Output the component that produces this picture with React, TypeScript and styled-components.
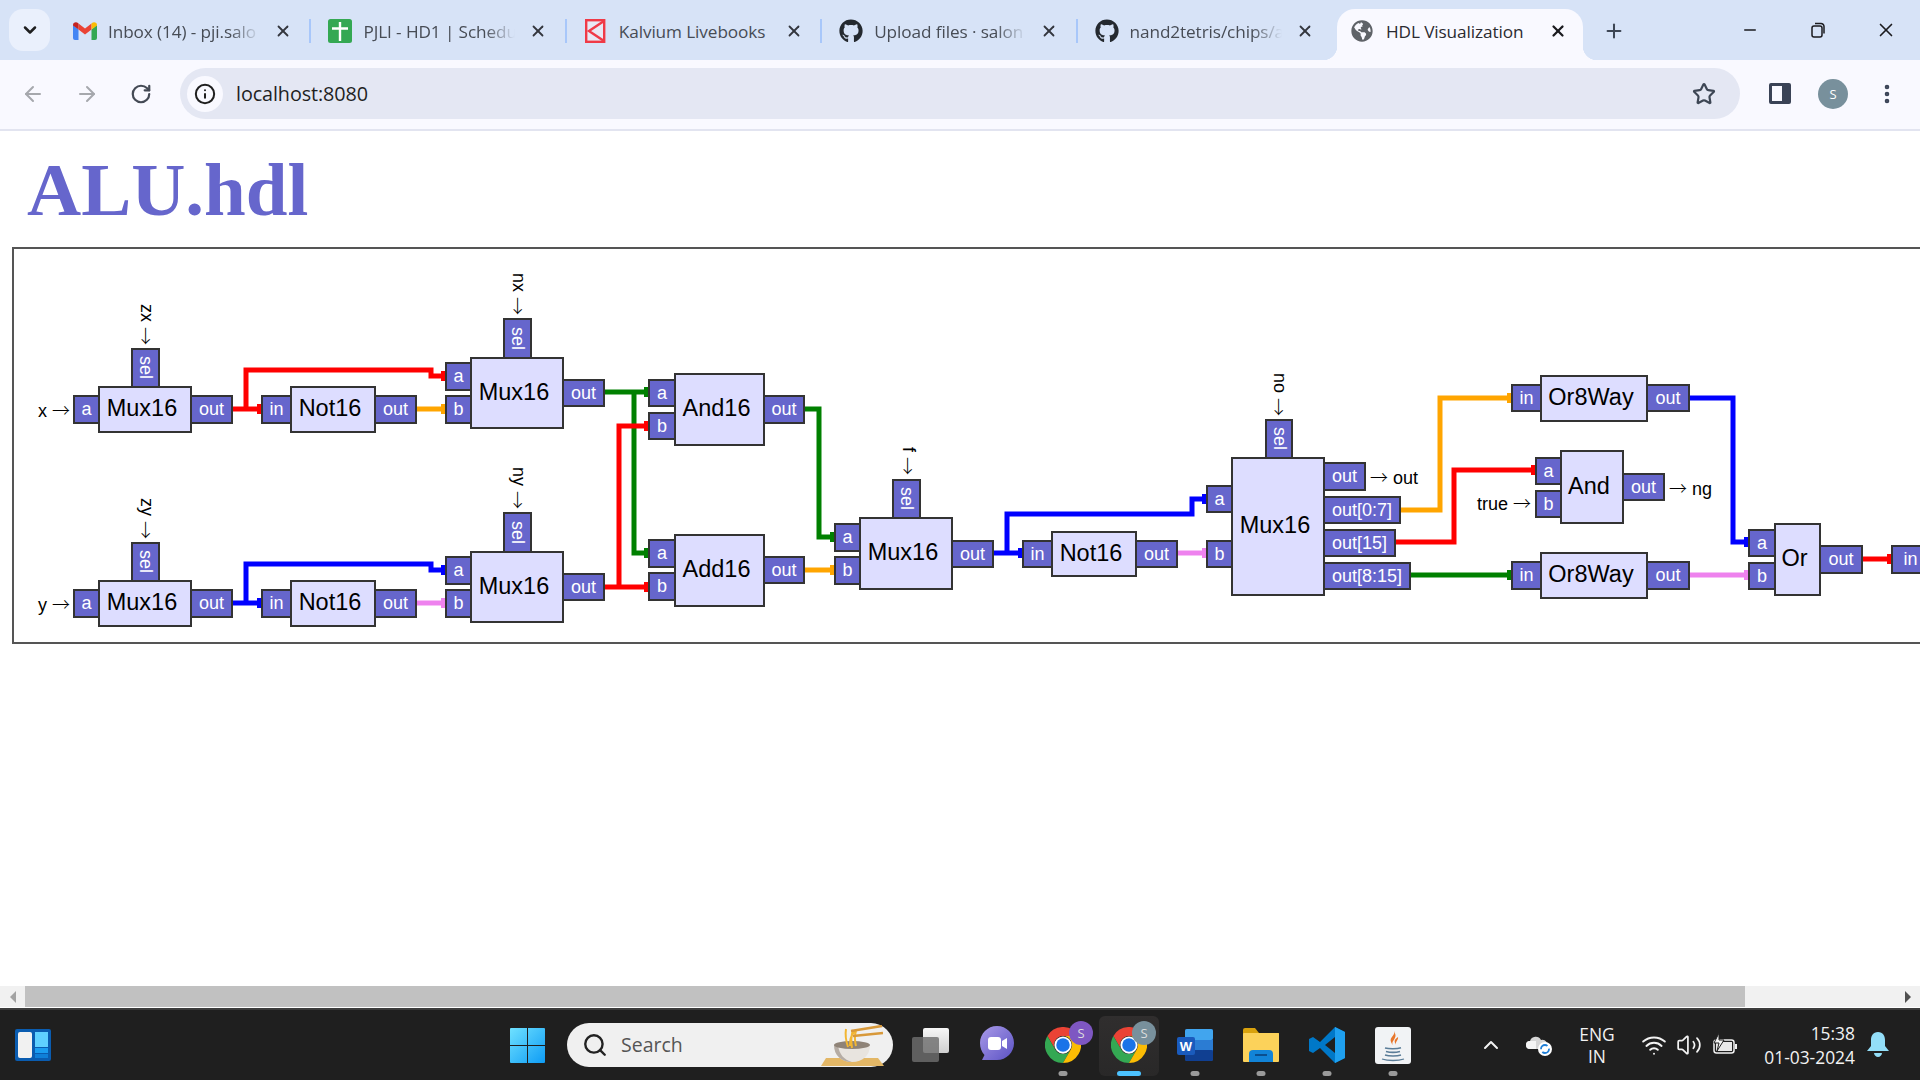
import React from 'react';
import styled, { createGlobalStyle } from 'styled-components';
import { ArrowLeft, ArrowRight, RotateCw, Star, EllipsisVertical, X, Plus, Minus, ChevronDown, ChevronUp, Search, Wifi, Volume2, Info } from 'lucide-react';
import { FaGithub, FaGlobeAmericas } from 'react-icons/fa';

const Global = createGlobalStyle`
  html, body { margin: 0; padding: 0; overflow: hidden; background: #fff; }
  * { box-sizing: border-box; }
`;

const UI = `"Open Sans", "Noto Sans", sans-serif`;
const ARIAL = `"Liberation Sans", Arial, sans-serif`;

const Page = styled.div`
  width: 1920px; height: 1080px; display: flex; flex-direction: column; overflow: hidden; font-family: ${UI};
`;

/* ---------- tab strip ---------- */
const TabStrip = styled.div`
  height: 60px; flex: none; background: #d7e3f7; display: flex; align-items: stretch; padding-left: 9px;
`;
const TabMenu = styled.div`
  width: 41px; height: 42px; margin-top: 9px; border-radius: 14px; background: #eaf0fc; color: #1f1f1f;
  display: flex; align-items: center; justify-content: center; flex: none;
`;
const TabList = styled.div`
  display: flex; margin-left: 5px; flex: none;
`;
const Tab = styled.div<{ $last?: boolean }>`
  width: 255.4px; height: 60px; flex: none; display: flex; align-items: center; padding: 2px 0 0 18px; position: relative;
  &::after {
    content: ''; position: absolute; right: -1px; top: 19px; height: 24px; width: 2px;
    background: ${p => (p.$last ? 'transparent' : '#a8c7fa')};
  }
`;
const ActiveTab = styled.div`
  width: 246px; height: 51px; margin: 9px 0 0 5px; flex: none; display: flex; align-items: center; padding: 0 0 7px 13px;
  background: #f9f9ff; border-radius: 18px 18px 0 0; position: relative;
  &::before, &::after { content: ''; position: absolute; bottom: 0; width: 14px; height: 14px; }
  &::before { left: -14px; background: radial-gradient(circle at 0 0, transparent 14px, #f9f9ff 14.5px); }
  &::after { right: -14px; background: radial-gradient(circle at 100% 0, transparent 14px, #f9f9ff 14.5px); }
`;
const TabIcon = styled.div`
  width: 24px; height: 24px; flex: none; display: flex; align-items: center; justify-content: center; color: #24292f;
`;
const TabTitle = styled.div<{ $fade?: boolean; $active?: boolean }>`
  width: 152px; margin-left: ${p => (p.$active ? '12px' : '11px')}; white-space: nowrap; font-size: 17.2px; letter-spacing: -0.1px;
  color: ${p => (p.$active ? '#2b2b30' : '#474c55')};
  ${p => (p.$fade ? 'mask-image: linear-gradient(to right, #000 80%, transparent 100%);' : '')}
`;
const TabClose = styled.div<{ $active?: boolean }>`
  margin-left: ${p => (p.$active ? '10px' : '13px')}; width: 20px; height: 20px; display: flex; align-items: center; justify-content: center; color: #33363d;
`;
const NewTab = styled.div`
  margin-left: 20px; width: 22px; height: 60px; padding-top: 2px; display: flex; align-items: center; justify-content: center; color: #3d4654; flex: none;
`;
const WindowControls = styled.div`
  margin-left: auto; display: flex; height: 60px; align-items: center; color: #1b1b1f;
`;
const WinButton = styled.div`
  width: 68px; display: flex; align-items: center; justify-content: center;
`;

/* ---------- toolbar ---------- */
const Toolbar = styled.div`
  height: 71px; flex: none; background: #f9f9ff; border-bottom: 2px solid #e2e4f0; display: flex; align-items: center; padding: 0 0 2px 0;
`;
const NavButton = styled.div<{ $dim?: boolean; $w: number }>`
  width: ${p => p.$w}px; flex: none; display: flex; justify-content: center; align-items: center; color: ${p => (p.$dim ? '#a6a8ad' : '#444a55')};
`;
const Omnibox = styled.div`
  margin-left: 6px; width: 1560px; height: 51px; flex: none; border-radius: 26px; background: #e4e7f3;
  display: flex; align-items: center; padding: 0 0 0 7px; color: #1f1f1f;
`;
const InfoChip = styled.div`
  width: 36px; height: 36px; border-radius: 50%; background: #f9f9ff; display: flex; align-items: center; justify-content: center; flex: none;
`;
const Url = styled.div`
  margin-left: 13px; font-size: 19.8px; letter-spacing: -0.1px; color: #1f1f1f;
`;
const OmniStar = styled.div`
  margin-left: auto; margin-right: 24px; display: flex; color: #3d4654;
`;
const SidePanel = styled.div`
  width: 22px; height: 21px; border: 3px solid #3a4356; border-right-width: 9px; border-radius: 2px; flex: none; margin-left: 29px;
`;
const Avatar = styled.div`
  width: 30px; height: 30px; border-radius: 50%; background: #78909c; color: #fff; font-size: 13px; margin-left: 27px; flex: none;
  display: flex; align-items: center; justify-content: center;
`;
const MoreButton = styled.div`
  margin-left: 27px; color: #3a4356; display: flex; flex: none;
`;

/* ---------- page content ---------- */
const Content = styled.div`
  flex: 1; min-height: 0; background: #fff; overflow: hidden; padding: 16px 0 0 0;
`;
const Title = styled.h1`
  margin: 0 0 14px 27px; font: bold 75px/86px "Liberation Serif", "Times New Roman", serif; color: #6666cc;
`;
const Canvas = styled.div`
  position: relative; margin-left: 12px; width: 2100px; height: 397px; border: 2px solid #555;
`;
const WireLayer = styled.svg`
  position: absolute; left: 0; top: 0; width: 100%; height: 100%;
`;
const OX = 14;
const OY = 249;
const place = ({ $b }: { $b: number[] }) => ({
  style: { left: $b[0] - OX, top: $b[1] - OY, width: $b[2] - $b[0], height: $b[3] - $b[1] },
});
const GateBox = styled.div.attrs(place)<{ $b: number[] }>`
  position: absolute; background: #ddddff; border: 2px solid #333; color: #000; font: 23.5px ${ARIAL};
  display: flex; align-items: center; justify-content: center; padding: 0 6px 2px 0; white-space: nowrap;
`;
const Port = styled.div.attrs(place)<{ $b: number[]; $vertical?: boolean }>`
  position: absolute; background: #6666cc; border: 2px solid #333; color: #fff; font: 18px ${ARIAL};
  display: flex; align-items: center; justify-content: center; white-space: nowrap;
  ${p => (p.$vertical ? 'writing-mode: vertical-rl;' : '')}
`;
const PinLabel = styled.div<{ $x: number; $y: number; $vertical?: boolean }>`
  position: absolute; left: ${p => p.$x - OX}px; top: ${p => p.$y - OY}px; font: 18px/20px ${ARIAL}; color: #000; white-space: nowrap;
  ${p => (p.$vertical ? 'writing-mode: vertical-rl;' : '')}
`;
const Arrow = styled.span`
  font-family: "Noto Sans CJK SC", sans-serif; font-weight: 300; line-height: 20px;
`;

/* ---------- scrollbar ---------- */
const ScrollBar = styled.div`
  height: 21px; flex: none; background: #f1f1f1; display: flex; align-items: stretch; margin-bottom: 1px;
`;
const ScrollArrow = styled.div<{ $end?: boolean }>`
  width: 25px; flex: none; display: flex; align-items: center; justify-content: center;
  ${p => (p.$end ? 'margin-left: auto;' : '')}
`;
const ScrollThumb = styled.div`
  width: 1720px; background: #c1c1c1; flex: none;
`;

/* ---------- taskbar ---------- */
const Taskbar = styled.div`
  height: 72px; flex: none; background: #1f1f1f; border-top: 2px solid #3c3c3c; display: flex; align-items: center; padding-left: 15px; color: #f2f2f2; position: relative;
`;
const StartButton = styled.div`
  margin-left: 459px; display: flex; flex: none;
`;
const TaskSearch = styled.div`
  width: 326px; height: 44px; border-radius: 22px; background: #f0f0f0; margin-left: 22px; flex: none; display: flex; align-items: center; padding-left: 15px; color: #222; position: relative;
`;
const SearchText = styled.span`
  font-size: 19.5px; color: #555; margin-left: 13px; padding-bottom: 1px;
`;
const BowlArt = styled.svg`
  position: absolute; right: 7px; top: 2px;
`;
const TaskSlots = styled.div`
  display: flex; margin-left: 5px; flex: none;
`;
const Slot = styled.div<{ $active?: boolean; $dot?: boolean }>`
  width: 66px; height: 60px; position: relative; display: flex; align-items: center; justify-content: center; flex: none; border-radius: 6px;
  padding-bottom: 2px; margin-top: 2px;
  ${p => (p.$active ? 'background: linear-gradient(#302e2e,#292828); outline: 0; width: 60px; margin: 2px 3px 0;' : '')}
  &::after {
    content: ''; position: absolute; bottom: 0px; left: 50%; transform: translateX(-50%); border-radius: 3px;
    width: ${p => (p.$active ? 24 : p.$dot ? 9 : 0)}px; height: 5px; background: ${p => (p.$active ? '#4cc2ff' : '#9a9a9a')};
  }
`;
const Badge = styled.div<{ $bg: string }>`
  position: absolute; right: 3px; top: 5px; width: 24px; height: 24px; border-radius: 50%; background: ${p => p.$bg}; color: #ddd;
  font-size: 13px; display: flex; align-items: center; justify-content: center;
`;
const Tray = styled.div`
  display: flex; align-items: center; flex: none; margin-left: 45px;
`;
const TrayIcon = styled.div<{ $w: number }>`
  width: ${p => p.$w}px; display: flex; justify-content: center; align-items: center; flex: none;
`;
const LangBlock = styled.div`
  width: 60px; text-align: center; font-size: 17.4px; line-height: 22px; flex: none; margin: 0 10px 0 0;
`;
const Clock = styled.div`
  width: 112px; text-align: right; font-size: 17.4px; line-height: 24px; flex: none; white-space: nowrap;
`;
const Bell = styled.div`
  margin-left: 12px; display: flex; flex: none;
`;

/* ---------- drawings ---------- */
const GmailIcon = () => (
  <svg width="24" height="20" viewBox="0 0 24 18">
    <path d="M0 3v13a2 2 0 0 0 2 2h3.5V7.5z" fill="#4285f4" />
    <path d="M24 3v13a2 2 0 0 1-2 2h-3.5V7.5z" fill="#34a853" />
    <path d="M5.5 7.5L12 12.4l6.500-4.900V1.500L12 6.400 5.500 1.500z" fill="#ea4335" />
    <path d="M0 3c0-2.500 3.200-3.800 5.500-1.500v6L0 3.500z" fill="#c5221f" />
    <path d="M24 3c0-2.500-3.200-3.800-5.500-1.500v6L24 3.500z" fill="#fbbc04" />
  </svg>
);
const SheetsIcon = () => (
  <svg width="24" height="24" viewBox="0 0 24 24">
    <rect width="24" height="24" rx="2.500" fill="#34a853" />
    <path d="M12 3v19M4 9.500h16" stroke="#fff" strokeWidth="2.400" />
  </svg>
);
const KalviumIcon = () => (
  <svg width="22" height="24" viewBox="0 0 22 24">
    <rect x="1.200" y="1.200" width="18" height="21.600" fill="#e8e8f4" stroke="#f03a47" strokeWidth="2.400" />
    <path d="M19 2L4 12l15 10" fill="none" stroke="#f03a47" strokeWidth="2.400" />
  </svg>
);
const ChromeIcon = () => (
  <svg width="36" height="36" viewBox="0 0 48 48">
    <path d="M24 12H44.800A24 24 0 0 0 3.200 12L13.600 30A12 12 0 0 1 24 12z" fill="#ea4335" />
    <path d="M3.200 12A24 24 0 0 0 24 48L34.400 30A12 12 0 0 1 13.600 30z" fill="#34a853" />
    <path d="M44.800 12H24A12 12 0 0 1 34.400 30L24 48A24 24 0 0 0 44.800 12z" fill="#fbbc04" />
    <circle cx="24" cy="24" r="11.500" fill="#fff" />
    <circle cx="24" cy="24" r="9" fill="#1a73e8" />
  </svg>
);
const WidgetIcon = () => (
  <svg width="36" height="32" viewBox="0 0 36 32">
    <rect width="36" height="32" rx="2" fill="#0a5cb0" />
    <rect x="3" y="3" width="14" height="26" rx="2" fill="#f1f1f1" />
    <rect x="20" y="3" width="13" height="15" fill="#5fd0ff" />
    <rect x="20" y="19" width="13" height="5" fill="#1a9cf0" />
    <rect x="20" y="25" width="13" height="4" fill="#0f7fd8" />
  </svg>
);
const StartIcon = () => (
  <svg width="35" height="35" viewBox="0 0 35 35">
    <defs>
      <linearGradient id="win" x1="0" y1="0" x2="1" y2="1"><stop offset="0" stopColor="#6fe1ff" /><stop offset="1" stopColor="#0e9cf5" /></linearGradient>
    </defs>
    <path d="M0 1a1 1 0 0 1 1-1h16v17H0zM18 0h16a1 1 0 0 1 1 1v16H18zM0 18h17v17H1a1 1 0 0 1-1-1zM18 18h17v16a1 1 0 0 1-1 1H18z" fill="url(#win)" />
  </svg>
);
const NoodleBowl = () => (
  <BowlArt width="66" height="42" viewBox="0 0 66 42">
    <path d="M6 33h52l6 8H1z" fill="#e3b766" />
    <path d="M14 20h36c0 10-7 17-18 17S14 30 14 20z" fill="#e8e4df" />
    <path d="M14 20c0 10 7 17 18 17-8-2-13-8-14-17z" fill="#b5aca4" />
    <ellipse cx="32" cy="20" rx="18" ry="4" fill="#8f8377" />
    <path d="M28 22c-2-6-3-12-2-18M32 23c-1-6-1-12 1-18M36 21c-1-4-2-9 0-15M30 21c0-5 0-10 5-15" stroke="#f2b632" strokeWidth="2" fill="none" />
    <path d="M31 6L62 1M33 11l30-3" stroke="#d8993a" strokeWidth="2.600" />
  </BowlArt>
);
const TaskViewIcon = () => (
  <svg width="38" height="35" viewBox="0 0 38 35">
    <defs>
      <linearGradient id="tv" x1="0" y1="0" x2="0" y2="1"><stop offset="0" stopColor="#f6f6f6" /><stop offset="1" stopColor="#d0d0d0" /></linearGradient>
    </defs>
    <rect x="11" y="0" width="26" height="25" rx="2" fill="url(#tv)" />
    <rect x="0" y="9" width="27" height="25" rx="2" fill="#6e6e6e" fillOpacity="0.82" />
  </svg>
);
const MeetIcon = () => (
  <svg width="34" height="38" viewBox="0 0 34 38">
    <defs>
      <linearGradient id="meet" x1="0" y1="0" x2="1" y2="1"><stop offset="0" stopColor="#a99ae8" /><stop offset="1" stopColor="#5b52c4" /></linearGradient>
    </defs>
    <path d="M17 0c9.500 0 17 7.600 17 17s-7.500 17-17 17H2l2.500-5C1.500 26 0 21.600 0 17 0 7.600 7.500 0 17 0z" fill="url(#meet)" />
    <rect x="8" y="11" width="13" height="13" rx="3" fill="#fff" />
    <path d="M22 15l5-3v11l-5-3z" fill="#fff" />
  </svg>
);
const WordTile = styled.div`
  width: 36px; height: 32px; position: relative;
`;
const WordSmall = styled.div`
  position: absolute; left: 0; top: 8px; width: 18px; height: 18px; background: #1a5bbd; border-radius: 2px; color: #fff;
  font: bold 13px ${ARIAL}; display: flex; align-items: center; justify-content: center;
`;
const WordIcon = () => (
  <WordTile>
    <svg width="36" height="32" viewBox="0 0 36 32">
      <rect x="8" y="0" width="28" height="32" rx="2" fill="#185abd" />
      <rect x="8" y="0" width="28" height="11" rx="2" fill="#41a5ee" />
      <rect x="8" y="11" width="28" height="10" fill="#2b7cd3" />
      <rect x="8" y="21" width="28" height="11" rx="2" fill="#103f91" />
    </svg>
    <WordSmall>W</WordSmall>
  </WordTile>
);
const FolderIcon = () => (
  <svg width="36" height="34" viewBox="0 0 36 34">
    <path d="M0 2a2 2 0 0 1 2-2h10l4 5h20v4H0z" fill="#d9a20d" />
    <rect x="0" y="5" width="36" height="29" rx="1" fill="#fcd25a" />
    <path d="M6 34V26a4 4 0 0 1 4-4h16a4 4 0 0 1 4 4v8z" fill="#1284d8" />
    <rect x="12" y="26" width="12" height="2" fill="#0b4f8f" />
  </svg>
);
const VSCodeIcon = () => (
  <svg width="36" height="36" viewBox="0 0 36 36">
    <path d="M26 0l10 5v26l-10 5L11 21l-7 5-4-2v-12l4-2 7 5z" fill="#0078c8" />
    <path d="M26 0l10 5v26l-10 5z" fill="#1fa0ef" />
    <path d="M26 10l-10 8 10 8z" fill="#1f1f1f" />
  </svg>
);
const JavaIcon = () => (
  <svg width="36" height="37" viewBox="0 0 36 37">
    <rect width="36" height="37" rx="3" fill="#f1f3f5" />
    <path d="M19 4c2 4-5 6-3 11 .6 1.500 1.500 2.500 2 3-2.500-3 3-6 2.500-10-.2-1.500-1-3-1.500-4z" fill="#e8762b" />
    <path d="M23 10c-3 2-4 3.500-3 6 .3.800.6 1.500.8 2-1-3 3-5 2.200-8z" fill="#e8762b" />
    <path d="M10 21c4 1 12 1 16-.2M11 24.500c4 1 10 1 14 0M10 28c4 1.200 12 1.200 16 0" stroke="#5b7d98" strokeWidth="1.500" fill="none" />
    <path d="M7 32c6 2 16 2 22 0" stroke="#5b7d98" strokeWidth="1.300" fill="none" />
  </svg>
);
const CloudIcon = () => (
  <svg width="26" height="22" viewBox="0 0 26 22">
    <path d="M4 15a4 4 0 0 1 0-8 6 6 0 0 1 11-1 4.500 4.500 0 0 1 3 9z" fill="#d6d6d6" />
    <path d="M4 15a4 4 0 0 1 0-8h6v8z" fill="#f4f4f4" />
    <circle cx="19" cy="15" r="7" fill="#fff" />
    <circle cx="19" cy="15" r="4" fill="none" stroke="#1f7fd8" strokeWidth="1.800" strokeDasharray="9 3" />
  </svg>
);
const BatteryIcon = () => (
  <svg width="26" height="26" viewBox="0 0 26 26" fill="none">
    <rect x="2" y="8" width="20" height="13" rx="2.500" stroke="#f2f2f2" strokeWidth="1.500" />
    <rect x="4" y="10" width="16" height="9" fill="#e8e8e8" />
    <rect x="23" y="12" width="2" height="5" fill="#f2f2f2" />
    <path d="M7 1L2 11h5l-2 8 7-11H7z" fill="#f2f2f2" stroke="#1f1f1f" />
  </svg>
);
const RestoreIcon = () => (
  <svg width="16" height="16" viewBox="0 0 16 16" fill="none" stroke="currentColor" strokeWidth="1.500">
    <rect x="2" y="4" width="10" height="11" rx="2" />
    <path d="M5 1.500h6a3 3 0 0 1 3 3v7" />
  </svg>
);
const BellIcon = () => (
  <svg width="22" height="26" viewBox="0 0 22 26" fill="#93def8">
    <path d="M11 0c5 0 7 4 7 8v6l4 5H0l4-5V8c0-4 2-8 7-8z" />
    <path d="M7 21h8c0 2-2 4-4 4s-4-2-4-4z" />
  </svg>
);

/* ---------- diagram data (page coordinates) ---------- */
const boxes: [string, number, number, number, number][] = [
  ['Mux16', 98, 386, 192, 433], ['Not16', 290, 386, 376, 433], ['Mux16', 470, 357, 564, 429],
  ['Mux16', 98, 580, 192, 627], ['Not16', 290, 580, 376, 627], ['Mux16', 470, 551, 564, 623],
  ['And16', 674, 373, 765, 446], ['Add16', 674, 534, 765, 607], ['Mux16', 859, 517, 953, 590],
  ['Not16', 1051, 531, 1137, 577], ['Mux16', 1231, 457, 1325, 596], ['Or8Way', 1540, 375, 1648, 422],
  ['And', 1560, 450, 1624, 524], ['Or8Way', 1540, 552, 1648, 599], ['Or', 1774, 523, 1821, 596],
];
const ports: [string, number, number, number, number, boolean?][] = [
  ['a', 73, 395, 100, 424], ['out', 190, 395, 233, 424], ['sel', 131, 348, 160, 388, true],
  ['in', 261, 395, 292, 424], ['out', 374, 395, 417, 424],
  ['a', 445, 362, 472, 391], ['b', 445, 395, 472, 424], ['out', 562, 379, 605, 407], ['sel', 503, 318, 532, 359, true],
  ['a', 73, 589, 100, 618], ['out', 190, 589, 233, 618], ['sel', 131, 542, 160, 582, true],
  ['in', 261, 589, 292, 618], ['out', 374, 589, 417, 618],
  ['a', 445, 556, 472, 585], ['b', 445, 589, 472, 618], ['out', 562, 573, 605, 601], ['sel', 503, 512, 532, 553, true],
  ['a', 648, 379, 676, 407], ['b', 648, 412, 676, 440], ['out', 763, 395, 805, 424],
  ['a', 648, 539, 676, 568], ['b', 648, 572, 676, 601], ['out', 763, 556, 805, 584],
  ['a', 834, 523, 861, 552], ['b', 834, 556, 861, 585], ['out', 951, 540, 994, 568], ['sel', 892, 479, 921, 519, true],
  ['in', 1022, 540, 1053, 568], ['out', 1135, 540, 1178, 568],
  ['a', 1206, 485, 1233, 513], ['b', 1206, 540, 1233, 568], ['sel', 1265, 419, 1293, 459, true],
  ['out', 1323, 462, 1366, 491], ['out[0:7]', 1323, 496, 1401, 524], ['out[15]', 1323, 529, 1396, 557], ['out[8:15]', 1323, 562, 1411, 590],
  ['in', 1511, 384, 1542, 412], ['out', 1646, 384, 1690, 412],
  ['a', 1535, 457, 1562, 485], ['b', 1535, 490, 1562, 518], ['out', 1622, 473, 1665, 501],
  ['in', 1511, 561, 1542, 590], ['out', 1646, 561, 1690, 590],
  ['a', 1748, 529, 1776, 557], ['b', 1748, 562, 1776, 590], ['out', 1819, 545, 1863, 574],
  ['in', 1891, 545, 1930, 574],
];
const RED = '#ff0000', ORANGE = '#ffa500', GREEN = '#008000', BLUE = '#0000ff', VIOLET = '#ee82ee';
const wires: [string, number[][]][] = [
  [RED, [[232, 409], [261, 409]]],
  [RED, [[246, 409], [246, 370], [431, 370], [431, 376], [445, 376]]],
  [ORANGE, [[416, 409], [445, 409]]],
  [BLUE, [[232, 603], [261, 603]]],
  [BLUE, [[246, 603], [246, 564], [431, 564], [431, 570], [445, 570]]],
  [VIOLET, [[416, 603], [445, 603]]],
  [GREEN, [[604, 392], [648, 392]]],
  [GREEN, [[634, 392], [634, 553], [648, 553]]],
  [RED, [[604, 587], [648, 587]]],
  [RED, [[619, 587], [619, 426], [648, 426]]],
  [GREEN, [[804, 409], [819, 409], [819, 537], [834, 537]]],
  [ORANGE, [[804, 570], [834, 570]]],
  [BLUE, [[993, 553], [1022, 553]]],
  [BLUE, [[1007, 553], [1007, 514], [1192, 514], [1192, 499], [1206, 499]]],
  [VIOLET, [[1177, 553], [1206, 553]]],
  [ORANGE, [[1400, 510], [1440, 510], [1440, 398], [1511, 398]]],
  [RED, [[1395, 542], [1454, 542], [1454, 470], [1535, 470]]],
  [GREEN, [[1410, 575], [1511, 575]]],
  [BLUE, [[1689, 398], [1733, 398], [1733, 542], [1748, 542]]],
  [VIOLET, [[1689, 575], [1748, 575]]],
  [RED, [[1862, 559], [1891, 559]]],
];
const labels: [string, number, number, boolean?][] = [
  ['x →', 38, 399], ['y →', 38, 593],
  ['zx →', 137, 304, true], ['nx →', 509, 273, true], ['zy →', 137, 498, true], ['ny →', 509, 467, true],
  ['f →', 899, 447, true], ['no →', 1270, 373, true],
  ['→ out', 1370, 466], ['→ ng', 1669, 477], ['true →', 1477, 492],
];

const tabs = [
  { icon: <GmailIcon />, title: 'Inbox (14) - pji.salo', fade: true },
  { icon: <SheetsIcon />, title: 'PJLI - HD1 | Schedu', fade: true },
  { icon: <KalviumIcon />, title: 'Kalvium Livebooks', fade: false },
  { icon: <FaGithub size={24} />, title: 'Upload files · salon', fade: true },
  { icon: <FaGithub size={24} />, title: 'nand2tetris/chips/a', fade: true },
];

export default function App() {
  return (
    <Page>
      <Global />
      <TabStrip>
        <TabMenu><ChevronDown size={20} strokeWidth={3} /></TabMenu>
        <TabList>
          {tabs.map((t, i) => (
            <Tab key={i} $last={i === 4}>
              <TabIcon>{t.icon}</TabIcon>
              <TabTitle $fade={t.fade}>{t.title}</TabTitle>
              <TabClose><X size={18} strokeWidth={2.4} /></TabClose>
            </Tab>
          ))}
          <ActiveTab>
            <TabIcon><FaGlobeAmericas size={22} color="#5f6368" /></TabIcon>
            <TabTitle $active>HDL Visualization</TabTitle>
            <TabClose $active><X size={18} strokeWidth={3} color="#1b1b1f" /></TabClose>
          </ActiveTab>
        </TabList>
        <NewTab><Plus size={22} strokeWidth={2.2} /></NewTab>
        <WindowControls>
          <WinButton><Minus size={18} strokeWidth={2} /></WinButton>
          <WinButton><RestoreIcon /></WinButton>
          <WinButton><X size={22} strokeWidth={1.8} /></WinButton>
        </WindowControls>
      </TabStrip>
      <Toolbar>
        <NavButton $dim $w={66}><ArrowLeft size={24} strokeWidth={2} /></NavButton>
        <NavButton $dim $w={42}><ArrowRight size={24} strokeWidth={2} /></NavButton>
        <NavButton $w={66}><RotateCw size={22} strokeWidth={2.400} /></NavButton>
        <Omnibox>
          <InfoChip><Info size={22} strokeWidth={2.200} /></InfoChip>
          <Url>localhost:8080</Url>
          <OmniStar><Star size={24} strokeWidth={2.200} /></OmniStar>
        </Omnibox>
        <SidePanel />
        <Avatar>S</Avatar>
        <MoreButton><EllipsisVertical size={24} strokeWidth={2.600} /></MoreButton>
      </Toolbar>
      <Content>
        <Title>ALU.hdl</Title>
        <Canvas>
          <WireLayer>
            {wires.map(([color, pts], i) => {
              const end = pts[pts.length - 1];
              const isPin = end[0] > pts[pts.length - 2][0];
              return (
                <g key={i} transform={`translate(${-OX} ${-OY})`}>
                  <polyline points={pts.map(p => p.join(',')).join(' ')} fill="none" stroke={color} strokeWidth={5} />
                  {isPin && <rect x={end[0] - 4} y={end[1] - 5} width={5} height={10} fill={color} />}
                </g>
              );
            })}
          </WireLayer>
          {ports.map(([label, x0, y0, x1, y1, vertical], i) => (
            <Port key={i} $b={[x0, y0, x1, y1]} $vertical={vertical}>{label}</Port>
          ))}
          {boxes.map(([title, x0, y0, x1, y1], i) => (
            <GateBox key={i} $b={[x0, y0, x1, y1]}>{title}</GateBox>
          ))}
          {labels.map(([text, x, y, vertical], i) => {
            const [before, after] = text.split('→');
            return (
              <PinLabel key={i} $x={x} $y={y} $vertical={vertical}>
                {before}<Arrow>→</Arrow>{after}
              </PinLabel>
            );
          })}
        </Canvas>
      </Content>
      <ScrollBar>
        <ScrollArrow>
          <svg width="8" height="12" viewBox="0 0 8 12"><path d="M7 0v12L1 6z" fill="#a3a3a3" /></svg>
        </ScrollArrow>
        <ScrollThumb />
        <ScrollArrow $end>
          <svg width="8" height="12" viewBox="0 0 8 12"><path d="M1 0v12l6-6z" fill="#505050" /></svg>
        </ScrollArrow>
      </ScrollBar>
      <Taskbar>
        <WidgetIcon />
        <StartButton><StartIcon /></StartButton>
        <TaskSearch>
          <Search size={26} strokeWidth={2.200} />
          <SearchText>Search</SearchText>
          <NoodleBowl />
        </TaskSearch>
        <TaskSlots>
          <Slot><TaskViewIcon /></Slot>
          <Slot><MeetIcon /></Slot>
          <Slot $dot><ChromeIcon /><Badge $bg="#7e57c2">S</Badge></Slot>
          <Slot $active><ChromeIcon /><Badge $bg="#78909c">S</Badge></Slot>
          <Slot $dot><WordIcon /></Slot>
          <Slot $dot><FolderIcon /></Slot>
          <Slot $dot><VSCodeIcon /></Slot>
          <Slot $dot><JavaIcon /></Slot>
        </TaskSlots>
        <Tray>
          <TrayIcon $w={40}><ChevronUp size={24} strokeWidth={2} /></TrayIcon>
          <TrayIcon $w={56}><CloudIcon /></TrayIcon>
          <LangBlock>ENG<br />IN</LangBlock>
          <TrayIcon $w={34}><Wifi size={26} strokeWidth={1.800} /></TrayIcon>
          <TrayIcon $w={36}><Volume2 size={26} strokeWidth={1.600} /></TrayIcon>
          <TrayIcon $w={36}><BatteryIcon /></TrayIcon>
          <Clock>15:38<br />01-03-2024</Clock>
          <Bell><BellIcon /></Bell>
        </Tray>
      </Taskbar>
    </Page>
  );
}
